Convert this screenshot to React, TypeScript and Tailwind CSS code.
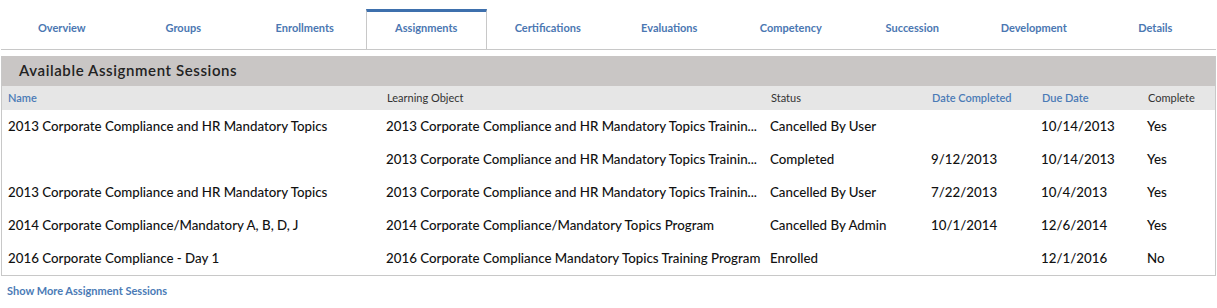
const tabs = [
  "Overview",
  "Groups",
  "Enrollments",
  "Assignments",
  "Certifications",
  "Evaluations",
  "Competency",
  "Succession",
  "Development",
  "Details",
];

const rows = [
  {
    name: "2013 Corporate Compliance and HR Mandatory Topics",
    object: "2013 Corporate Compliance and HR Mandatory Topics Trainin...",
    status: "Cancelled By User",
    completed: "",
    due: "10/14/2013",
    complete: "Yes",
  },
  {
    name: "",
    object: "2013 Corporate Compliance and HR Mandatory Topics Trainin...",
    status: "Completed",
    completed: "9/12/2013",
    due: "10/14/2013",
    complete: "Yes",
  },
  {
    name: "2013 Corporate Compliance and HR Mandatory Topics",
    object: "2013 Corporate Compliance and HR Mandatory Topics Trainin...",
    status: "Cancelled By User",
    completed: "7/22/2013",
    due: "10/4/2013",
    complete: "Yes",
  },
  {
    name: "2014 Corporate Compliance/Mandatory A, B, D, J",
    object: "2014 Corporate Compliance/Mandatory Topics Program",
    status: "Cancelled By Admin",
    completed: "10/1/2014",
    due: "12/6/2014",
    complete: "Yes",
  },
  {
    name: "2016 Corporate Compliance - Day 1",
    object: "2016 Corporate Compliance Mandatory Topics Training Program",
    status: "Enrolled",
    completed: "",
    due: "12/1/2016",
    complete: "No",
  },
];

const columns = [
  { label: "Name", sortable: true, width: "w-[379px]" },
  { label: "Learning Object", sortable: false, width: "w-[384px]" },
  { label: "Status", sortable: false, width: "w-[161px]" },
  { label: "Date Completed", sortable: true, width: "w-[110px]" },
  { label: "Due Date", sortable: true, width: "w-[106px]" },
  { label: "Complete", sortable: false, width: "" },
];

const Tabs = () => (
  <div className="ml-px flex w-[1215px] border-b border-[#c8c8c8] pt-[9px]">
    {tabs.map((tab) => {
      const active = tab === "Assignments";
      return (
        <div
          key={tab}
          className={
            active
              ? "h-[40px] flex-1 border-x border-t-[3px] border-x-[#c8c8c8] border-t-[#3e70ad] bg-white pt-[9px] text-center text-[11px] leading-[14px] font-bold text-[#4b77b2]"
              : "h-[40px] flex-1 border-x border-t-[3px] border-transparent pt-[9px] text-center text-[11px] leading-[14px] font-bold text-[#4b77b2]"
          }
        >
          {tab}
        </div>
      );
    })}
  </div>
);

export default function App() {
  return (
    <div className="h-[308px] w-[1217px] bg-white font-['Lato','Liberation_Sans',sans-serif] text-[#111]">
      <Tabs />
      <div className="mt-[6px] ml-px w-[1215px] border border-t-0 border-[#c8c8c8]">
        <div className="flex h-[30px] items-center bg-[#c9c6c5] pb-[2px] pl-[17px] text-[15px] font-semibold tracking-[0.6px] text-[#222]">
          Available Assignment Sessions
        </div>
        <table className="w-full table-fixed border-collapse">
          <thead>
            <tr className="h-[24px] bg-[#e6e6e6]">
              {columns.map((c) => (
                <th
                  key={c.label}
                  className={
                    c.sortable
                      ? `${c.width} pl-[6px] text-left text-[11px] font-semibold text-[#4b7bb6]`
                      : `${c.width} pl-[6px] text-left text-[11px] font-normal text-[#333]`
                  }
                >
                  {c.label}
                </th>
              ))}
            </tr>
          </thead>
          <tbody>
            {rows.map((r, i) => (
              <tr key={i} className="h-[33px] text-[13.3px] font-medium whitespace-nowrap">
                <td className="pl-[6px]">{r.name}</td>
                <td className="pl-[5px]">{r.object}</td>
                <td className="pl-[5px]">{r.status}</td>
                <td className="pl-[5px]">{r.completed}</td>
                <td className="pl-[5px]">{r.due}</td>
                <td className="pl-[5px]">{r.complete}</td>
              </tr>
            ))}
          </tbody>
        </table>
      </div>
      <div className="mt-[8px] pl-[7px] text-[11px] leading-[14px] font-bold text-[#4b7bb6]">
        Show More Assignment Sessions
      </div>
    </div>
  );
}
